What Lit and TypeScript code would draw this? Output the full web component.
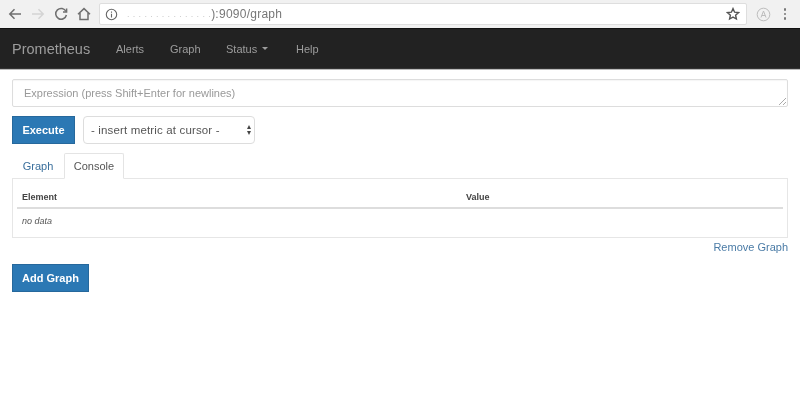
import { LitElement, html, css } from "lit";
import { customElement } from "lit/decorators.js";

@customElement("app-root")
export class AppRoot extends LitElement {
  static styles = css`
    :host { display: block; width: 800px; height: 400px; background: #fff; overflow: hidden;
      font-family: "Liberation Sans", Arial, sans-serif; font-size: 11px; color: #333; filter: blur(0.45px); }
    * { box-sizing: border-box; }
    .chrome { height: 28px; background: #f1f1f1; display: flex; align-items: center; padding: 0 0 0 7px; }
    .nav-icons { display: flex; align-items: center; gap: 7px; width: 92px; }
    .nav-icons svg { display: block; width: 16px; height: 16px; fill: none; stroke: #6f6f6f; stroke-width: 1.5; }
    .nav-icons svg.off { stroke: #d4d4d4; }
    .omni { width: 648px; height: 22px; background: #fff; border: 1px solid #dedede; border-radius: 2px;
      display: flex; align-items: center; padding: 0 6px 0 5px; color: #777; font-size: 12px; letter-spacing: 0.25px; }
    .omni svg { width: 13px; height: 13px; flex: none; }
    .host { color: #c9c9c9; margin-left: 9px; letter-spacing: 0.4px; font-size: 9px; }
    .url { flex: 1; }
    .star { width: 14px !important; height: 14px !important; }
    .ext { width: 15px; height: 15px; margin-left: 9px; flex: none; }
    .dots { margin-left: 13px; display: flex; flex-direction: column; gap: 2px; }
    .dots i { width: 2.4px; height: 2.4px; border-radius: 50%; background: #777; display: block; }

    .navbar { height: 41px; background: #222; border-top: 1px solid #111; border-bottom: 1px solid #333;
      box-shadow: 0 1px 0 #bbb; display: flex; align-items: center; padding-left: 12px; color: #9d9d9d; }
    .brand { font-size: 14.5px; width: 104px; }
    .navitem { font-size: 11px; }
    .alerts { width: 54px; } .graph { width: 56px; } .status { width: 70px; display: flex; align-items: center; gap: 5px; }
    .caret { width: 0; height: 0; border-left: 3px solid transparent; border-right: 3px solid transparent; border-top: 3px solid #9d9d9d; }

    .main { padding: 10px 12px 0 12px; }
    .expr { height: 28px; border: 1px solid #ddd; border-radius: 2px; position: relative; display: flex; align-items: center;
      padding-left: 11px; color: #999; font-size: 11px; box-shadow: inset 0 1px 1px rgba(0,0,0,.04); }
    .grip { position: absolute; right: 1px; bottom: 1px; width: 8px; height: 8px; }
    .controls { display: flex; gap: 8px; margin-top: 9px; align-items: center; }
    .btn { background: #2b78b4; border: 1px solid #26689c; color: #fff; height: 28px; display: flex; align-items: center;
      justify-content: center; font-size: 11px; font-weight: bold; }
    .exec { width: 63px; }
    .select { width: 172px; height: 28px; border: 1px solid #ddd; border-radius: 4px; display: flex; align-items: center;
      justify-content: space-between; padding: 0 3px 0 7px; color: #555; font-size: 11.5px; letter-spacing: 0.15px; }
    .spin { display: flex; flex-direction: column; gap: 2px; }
    .spin i { width: 0; height: 0; border-left: 2px solid transparent; border-right: 2px solid transparent; display: block; }
    .spin .up { border-bottom: 4px solid #444; } .spin .down { border-top: 4px solid #444; }

    .tabs { display: flex; height: 25px; margin-top: 9px; align-items: stretch; position: relative; top: 0; }
    .tab { display: flex; align-items: center; justify-content: center; font-size: 11px; }
    .tab.a { width: 52px; color: #3a6f9c; }
    .tab.b { width: 60px; color: #555; border: 1px solid #e4e4e4; border-bottom: 1px solid #fff; border-radius: 2px 2px 0 0; margin-bottom: -1px; background: #fff; z-index: 1; }
    .panel { height: 60px; border: 1px solid #e6e6e6; padding: 0 4px 0 4px; }
    .thead { height: 30px; border-bottom: 2px solid #ddd; display: grid; grid-template-columns: 444px 1fr; align-items: center;
      padding: 7px 5px 0; font-size: 9px; font-weight: bold; color: #444; }
    .nodata { font-style: italic; font-size: 9px; color: #555; padding: 7px 5px 0; }
    .remove { text-align: right; color: #4a7ba6; font-size: 11px; margin-top: 2px; line-height: 15px; }
    .add { width: 77px; margin-top: 9px; }
  `;

  render() {
    return html`
      <div class="chrome">
        <div class="nav-icons">
          <svg viewBox="0 0 16 16"><path d="M14 8H3M7.5 3.2 2.8 8l4.7 4.8"/></svg>
          <svg class="off" viewBox="0 0 16 16"><path d="M2 8h11M8.5 3.2 13.2 8l-4.7 4.8"/></svg>
          <svg viewBox="0 0 16 16"><path d="M13 5.5A5.4 5.4 0 1 0 13.4 9"/><path d="M13.6 2.5v3.6H10" /></svg>
          <svg viewBox="0 0 16 16"><path d="M2 8.2 8 2.6l6 5.6M4 7v6.5h8V7"/></svg>
        </div>
        <div class="omni">
          <svg viewBox="0 0 14 14" fill="none" stroke="#666" stroke-width="1.2"><circle cx="7" cy="7" r="5.6"/><path d="M7 6.2v4M7 3.7v1.3"/></svg>
          <span class="host">. . . . . . . . . . . . . . .</span><span class="url">):9090/graph</span>
          <svg class="star" viewBox="0 0 14 14" fill="none" stroke="#555" stroke-width="1.4"><path d="M7 1.6 8.6 5.2l3.9.4-2.9 2.6.8 3.8L7 10.1l-3.4 1.9.8-3.8L1.5 5.6l3.9-.4z"/></svg>
        </div>
        <svg class="ext" viewBox="0 0 15 15" fill="none" stroke="#bdbdbd" stroke-width="1"><circle cx="7.5" cy="7.5" r="6.3"/><path d="M5 10.5 7.5 4l2.5 6.5M5.8 8.5h3.4"/></svg>
        <div class="dots"><i></i><i></i><i></i></div>
      </div>
      <div class="navbar">
        <span class="brand">Prometheus</span>
        <span class="navitem alerts">Alerts</span>
        <span class="navitem graph">Graph</span>
        <span class="navitem status">Status <span class="caret"></span></span>
        <span class="navitem">Help</span>
      </div>
      <div class="main">
        <div class="expr">Expression (press Shift+Enter for newlines)
          <svg class="grip" viewBox="0 0 8 8" fill="none" stroke="#aaa" stroke-width="1"><path d="M1 8 8 1M5 8l3-3"/></svg>
        </div>
        <div class="controls">
          <div class="btn exec">Execute</div>
          <div class="select"><span>- insert metric at cursor -</span><span class="spin"><i class="up"></i><i class="down"></i></span></div>
        </div>
        <div class="tabs">
          <div class="tab a">Graph</div>
          <div class="tab b">Console</div>
        </div>
        <div class="panel">
          <div class="thead"><span>Element</span><span>Value</span></div>
          <div class="nodata">no data</div>
        </div>
        <div class="remove">Remove Graph</div>
        <div class="btn add">Add Graph</div>
      </div>
    `;
  }
}
